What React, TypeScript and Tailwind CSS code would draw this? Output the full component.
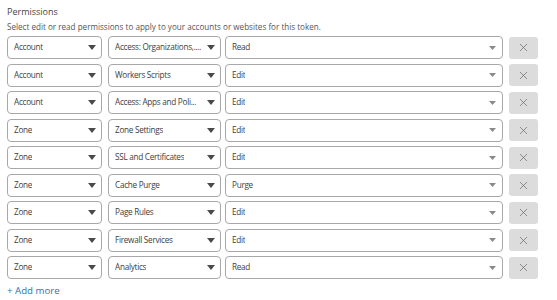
import { X } from 'lucide-react';

type Perm = { scope: string; resource: string; level: string };

const perms: Perm[] = [
    { scope: 'Account', resource: 'Access: Organizations,....', level: 'Read' },
    { scope: 'Account', resource: 'Workers Scripts', level: 'Edit' },
    { scope: 'Account', resource: 'Access: Apps and Poli...', level: 'Edit' },
    { scope: 'Zone', resource: 'Zone Settings', level: 'Edit' },
    { scope: 'Zone', resource: 'SSL and Certificates', level: 'Edit' },
    { scope: 'Zone', resource: 'Cache Purge', level: 'Purge' },
    { scope: 'Zone', resource: 'Page Rules', level: 'Edit' },
    { scope: 'Zone', resource: 'Firewall Services', level: 'Edit' },
    { scope: 'Zone', resource: 'Analytics', level: 'Read' },
];

function Caret({ light = false }: { light?: boolean }) {
    return light ? (
        <svg width="7" height="4" viewBox="0 0 7 4" className="shrink-0">
            <path d="M0 0h7L3.5 4z" fill="#8a8a8a" />
        </svg>
    ) : (
        <svg width="8" height="5" viewBox="0 0 8 5" className="shrink-0">
            <path d="M0 0h8L4 5z" fill="#4a4a4a" />
        </svg>
    );
}

function Select({ value, className, light }: { value: string; className: string; light?: boolean }) {
    return (
        <div
            className={
                'flex h-[23px] items-center justify-between gap-[1px] rounded-[4px] border border-[#a8a8a8] bg-white pl-[6px] text-[8.2px] tracking-[-0.28px] text-[#404040] ' +
                className
            }
        >
            <span className="overflow-hidden whitespace-nowrap">{value}</span>
            <Caret light={light} />
        </div>
    );
}

export default function App() {
    return (
        <div className="h-[300px] w-[557px] bg-white pl-[7px] pt-[4px] font-['Open_Sans',sans-serif]">
            <div className="text-[9px] leading-[16px] text-[#444]">Permissions</div>
            <div className="text-[8.1px] leading-[14px] text-[#555]">
                Select edit or read permissions to apply to your accounts or websites for this token.
            </div>
            <div className="mt-[2px] flex flex-col gap-[4.5px]">
                {perms.map((p, i) => (
                    <div key={i} className="flex items-center">
                        <Select value={p.scope} className="w-[95px] pr-[5px]" />
                        <Select value={p.resource} className="ml-[6px] w-[113px] pr-[5px]" />
                        <Select value={p.level} className="ml-[4px] w-[278px] pr-[6px]" light />
                        <button className="ml-[6px] flex h-[22px] w-[29px] items-center justify-center rounded-[3px] bg-[#dcdcdc] text-[#5e5e5e]">
                            <X size={13} strokeWidth={1.2} />
                        </button>
                    </div>
                ))}
            </div>
            <div className="mt-[4px] text-[9.7px] leading-[16px] text-[#2f72b8]">+ Add more</div>
        </div>
    );
}
